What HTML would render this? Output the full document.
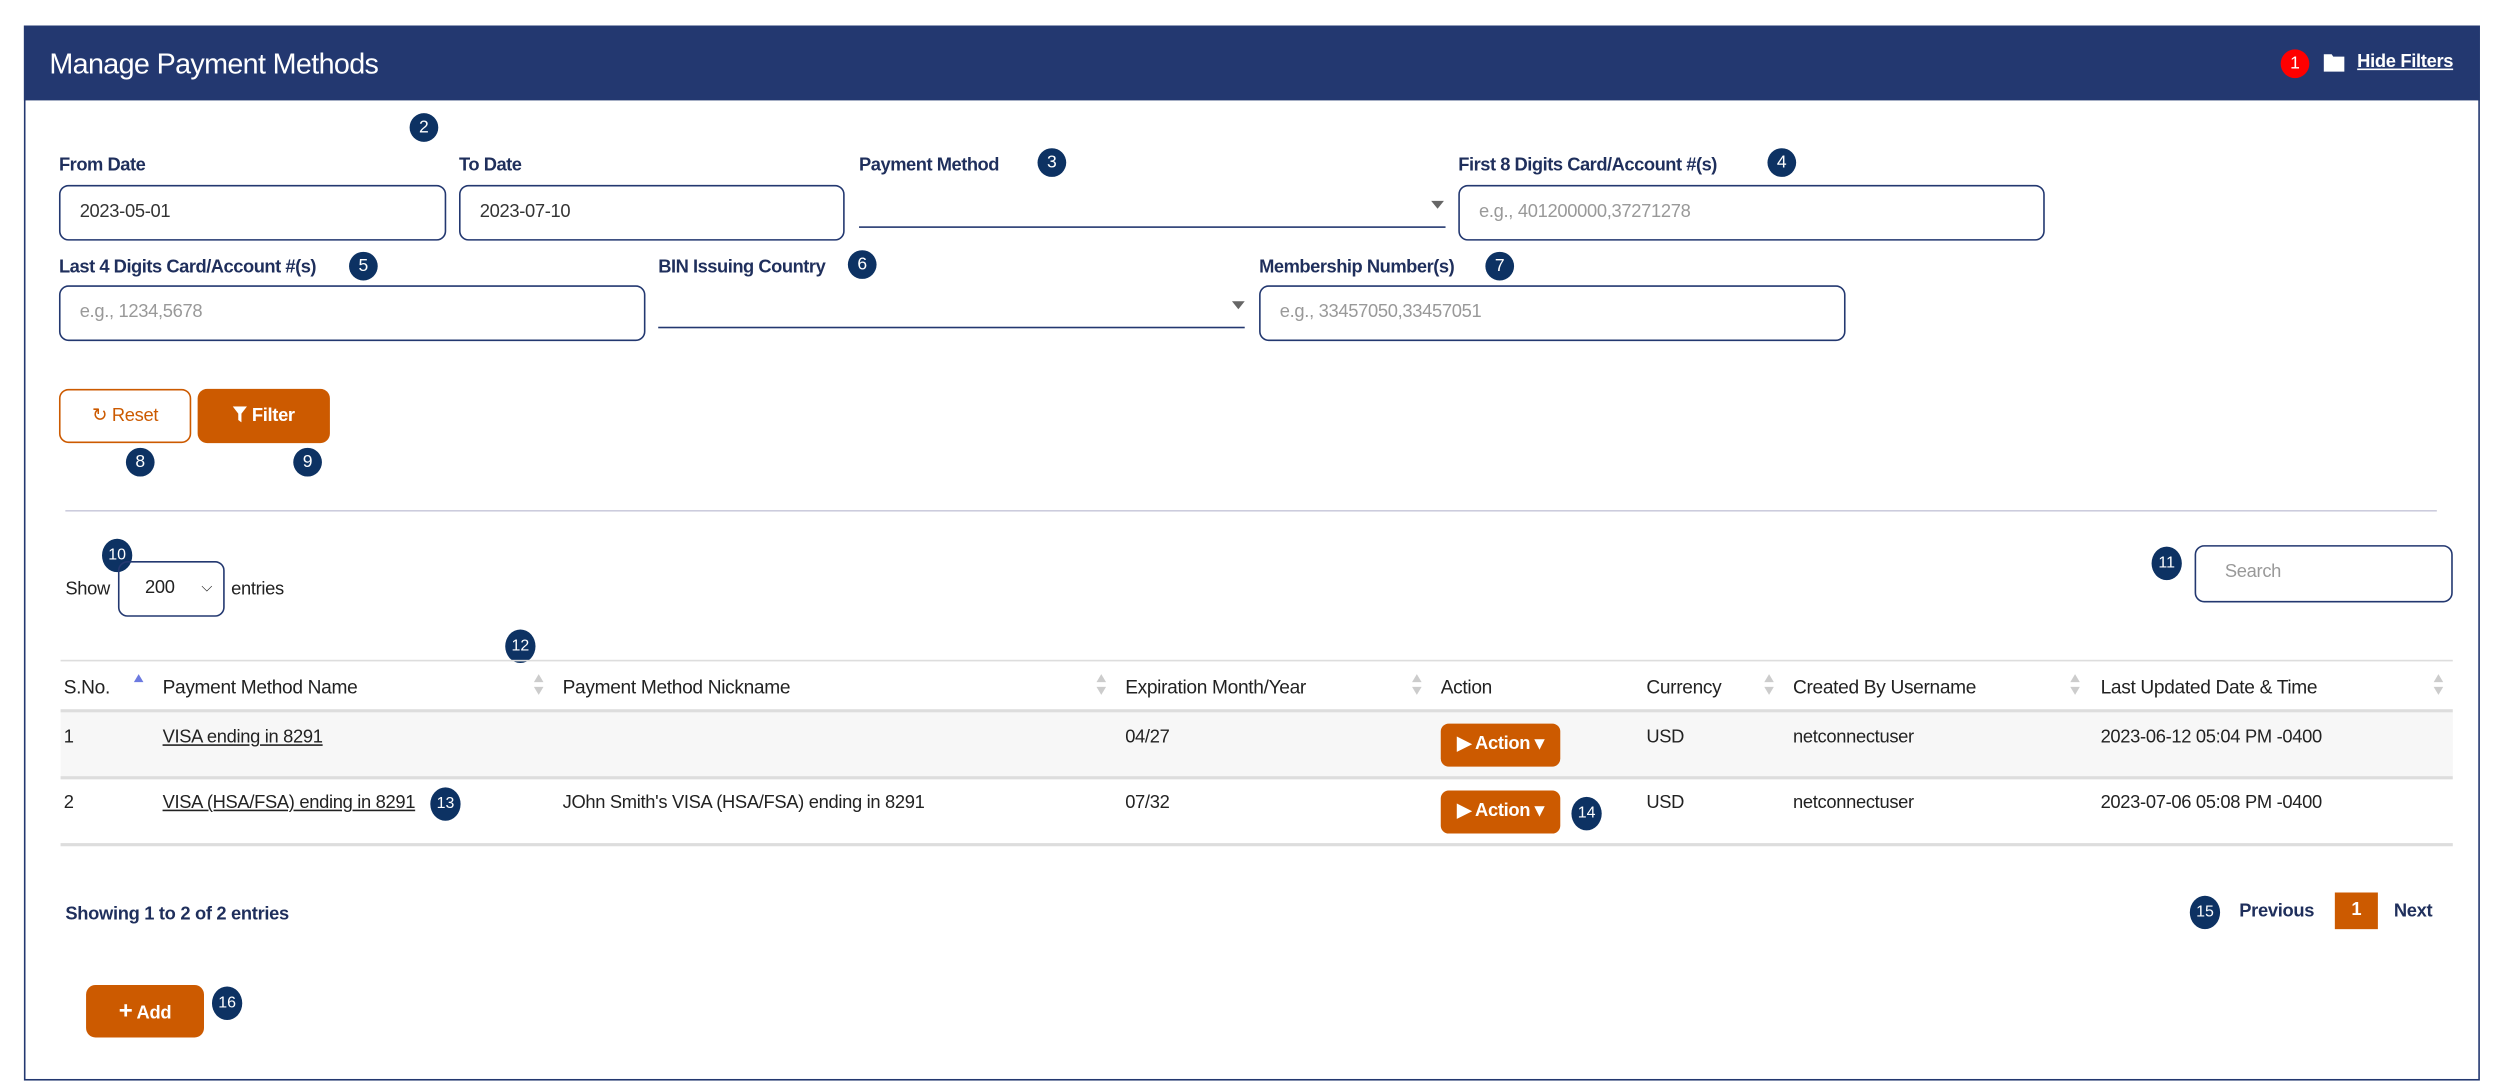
<!DOCTYPE html>
<html><head><meta charset="utf-8"><style>
html,body{margin:0;padding:0;background:#fff;}
body{width:2499px;height:1090px;overflow:hidden;}
#w{position:absolute;left:0;top:0;width:1568px;height:684px;transform:scale(1.59375);transform-origin:0 0;font-family:"Liberation Sans",sans-serif;color:#222;font-size:11.5px;letter-spacing:-0.2px;}
.a{position:absolute;white-space:nowrap;}
.b{position:absolute;width:18px;height:18px;border-radius:50%;background:#0d3263;color:#fff;font-size:11px;line-height:18px;text-align:center;letter-spacing:0;}
.lbl{position:absolute;font-size:11.5px;font-weight:bold;color:#1f2f5c;white-space:nowrap;letter-spacing:-0.3px;}
.in{position:absolute;border:1px solid #233870;border-radius:6px;box-sizing:border-box;height:35px;font-size:11.5px;line-height:33px;padding-left:12px;color:#333;}
.ph{color:#999;}
.sel{position:absolute;border-bottom:1px solid #233870;height:1px;}
.arr{position:absolute;width:0;height:0;border-left:4px solid transparent;border-right:4px solid transparent;border-top:5px solid #666;}
.th{position:absolute;top:424px;font-size:12px;color:#222;white-space:nowrap;}
.srt{position:absolute;top:423px;width:6px;height:14px;}
.srt:before{content:"";position:absolute;left:0;top:0;border-left:3px solid transparent;border-right:3px solid transparent;border-bottom:5px solid #ccc;}
.srt:after{content:"";position:absolute;left:0;top:8px;border-left:3px solid transparent;border-right:3px solid transparent;border-top:5px solid #ccc;}
.td{position:absolute;font-size:11.5px;color:#222;white-space:nowrap;}
.btn{position:absolute;background:#cc5a00;color:#fff;border-radius:5px;font-weight:bold;font-size:11.5px;text-align:center;}
</style></head><body><div id="w">
<div class="a" style="left:15px;top:16px;width:1539px;height:660px;border:1px solid #233870;"></div>
<div class="a" style="left:15px;top:16px;width:1541px;height:47px;background:#233870;"></div>
<div class="a" style="left:31px;top:30px;color:#fff;font-size:18px;letter-spacing:-0.4px;">Manage Payment Methods</div>
<div class="b" style="left:1431px;top:31px;background:#f00;">1</div>
<svg class="a" style="left:1458px;top:33px" width="13" height="12" viewBox="0 0 13 12"><path d="M0 1h5l1 1.5h7V12H0z" fill="#fff"/></svg>
<div class="a" style="left:1479px;top:33px;color:#fff;font-weight:bold;font-size:11.5px;text-decoration:underline;">Hide Filters</div>

<div class="b" style="left:257px;top:71px;">2</div>
<div class="lbl" style="left:37px;top:98px;">From Date</div>
<div class="lbl" style="left:288px;top:98px;">To Date</div>
<div class="lbl" style="left:539px;top:98px;">Payment Method</div>
<div class="b" style="left:651px;top:93px;">3</div>
<div class="lbl" style="left:915px;top:98px;">First 8 Digits Card/Account #(s)</div>
<div class="b" style="left:1109px;top:93px;">4</div>
<div class="in" style="left:37px;top:116px;width:243px;">2023-05-01</div>
<div class="in" style="left:288px;top:116px;width:242px;">2023-07-10</div>
<div class="sel" style="left:539px;top:141px;width:368px;"></div>
<div class="arr" style="left:898px;top:126px;"></div>
<div class="in ph" style="left:915px;top:116px;width:368px;">e.g., 401200000,37271278</div>

<div class="lbl" style="left:37px;top:162px;">Last 4 Digits Card/Account #(s)</div>
<div class="b" style="left:219px;top:158px;">5</div>
<div class="lbl" style="left:413px;top:162px;">BIN Issuing Country</div>
<div class="b" style="left:532px;top:157px;">6</div>
<div class="lbl" style="left:790px;top:162px;">Membership Number(s)</div>
<div class="b" style="left:932px;top:158px;">7</div>
<div class="in ph" style="left:37px;top:179px;width:368px;">e.g., 1234,5678</div>
<div class="sel" style="left:413px;top:204px;width:368px;"></div>
<div class="arr" style="left:773px;top:189px;"></div>
<div class="in ph" style="left:790px;top:179px;width:368px;">e.g., 33457050,33457051</div>

<div class="a" style="left:37px;top:244px;width:83px;height:34px;box-sizing:border-box;border:1px solid #cc5a00;border-radius:6px;color:#cc5a00;font-size:11.5px;line-height:32px;text-align:center;">&#x21bb; Reset</div>
<div class="btn" style="left:124px;top:244px;width:83px;height:34px;line-height:34px;border-radius:6px;"><svg width="9" height="10" viewBox="0 0 9 10" style="vertical-align:-1px"><path d="M0 0h9L5.5 4.5V10L3.5 8.5V4.5z" fill="#fff"/></svg> Filter</div>
<div class="b" style="left:79px;top:281px;">8</div>
<div class="b" style="left:184px;top:281px;">9</div>

<div class="a" style="left:41px;top:320px;width:1488px;height:1px;background:#ccd;"></div>
<div class="b" style="left:64px;top:338px;width:19px;height:21px;line-height:21px;font-size:10px;">10</div>
<div class="td" style="left:41px;top:364px;">Show</div>
<div class="a" style="left:74px;top:352px;width:67px;height:35px;box-sizing:border-box;border:1px solid #233870;border-radius:6px;font-size:11.5px;line-height:33px;padding-left:16px;">200<span style="position:absolute;right:7px;top:-1px;font-size:9px;">&#x2335;</span></div>
<div class="td" style="left:145px;top:364px;">entries</div>
<div class="b" style="left:1350px;top:343px;width:19px;height:21px;line-height:21px;font-size:10px;">11</div>
<div class="in ph" style="left:1377px;top:342px;width:162px;height:36px;padding-left:18px;">Search</div>
<div class="b" style="left:317px;top:395px;width:19px;height:21px;line-height:21px;font-size:10px;">12</div>

<div class="a" style="left:38px;top:414px;width:1501px;height:1px;background:#ddd;"></div>
<div class="th" style="left:40px;">S.No.</div>
<div class="a" style="left:84px;top:423px;border-left:3px solid transparent;border-right:3px solid transparent;border-bottom:5px solid #6c7ae0;"></div>
<div class="th" style="left:102px;">Payment Method Name</div><div class="srt" style="left:335px;"></div>
<div class="th" style="left:353px;">Payment Method Nickname</div><div class="srt" style="left:688px;"></div>
<div class="th" style="left:706px;">Expiration Month/Year</div><div class="srt" style="left:886px;"></div>
<div class="th" style="left:904px;">Action</div>
<div class="th" style="left:1033px;">Currency</div><div class="srt" style="left:1107px;"></div>
<div class="th" style="left:1125px;">Created By Username</div><div class="srt" style="left:1299px;"></div>
<div class="th" style="left:1318px;">Last Updated Date &amp; Time</div><div class="srt" style="left:1527px;"></div>
<div class="a" style="left:38px;top:445px;width:1501px;height:2px;background:#ddd;"></div>
<div class="a" style="left:38px;top:447px;width:1501px;height:40px;background:#f7f7f7;"></div>
<div class="a" style="left:38px;top:487px;width:1501px;height:2px;background:#ddd;"></div>
<div class="a" style="left:38px;top:529px;width:1501px;height:2px;background:#ddd;"></div>

<div class="td" style="left:40px;top:457px;">1</div>
<div class="td" style="left:102px;top:457px;text-decoration:underline;">VISA ending in 8291</div>
<div class="td" style="left:706px;top:457px;">04/27</div>
<div class="btn" style="left:904px;top:454px;width:75px;height:27px;line-height:27px;">&#x25B6; Action &#x25BE;</div>
<div class="td" style="left:1033px;top:457px;">USD</div>
<div class="td" style="left:1125px;top:457px;">netconnectuser</div>
<div class="td" style="left:1318px;top:457px;">2023-06-12 05:04 PM -0400</div>

<div class="td" style="left:40px;top:498px;">2</div>
<div class="td" style="left:102px;top:498px;text-decoration:underline;">VISA (HSA/FSA) ending in 8291</div>
<div class="b" style="left:270px;top:494px;width:19px;height:21px;line-height:21px;font-size:10px;">13</div>
<div class="td" style="left:353px;top:498px;">JOhn Smith's VISA (HSA/FSA) ending in 8291</div>
<div class="td" style="left:706px;top:498px;">07/32</div>
<div class="btn" style="left:904px;top:496px;width:75px;height:27px;line-height:27px;">&#x25B6; Action &#x25BE;</div>
<div class="b" style="left:986px;top:500px;width:19px;height:21px;line-height:21px;font-size:10px;">14</div>
<div class="td" style="left:1033px;top:498px;">USD</div>
<div class="td" style="left:1125px;top:498px;">netconnectuser</div>
<div class="td" style="left:1318px;top:498px;">2023-07-06 05:08 PM -0400</div>

<div class="td" style="left:41px;top:568px;color:#1f2f5c;font-weight:bold;">Showing 1 to 2 of 2 entries</div>
<div class="b" style="left:1374px;top:562px;width:19px;height:21px;line-height:21px;font-size:10px;">15</div>
<div class="td" style="left:1405px;top:566px;color:#1f2f5c;font-weight:bold;">Previous</div>
<div class="a" style="left:1465px;top:560px;width:27px;height:23px;background:#cc5a00;color:#fff;text-align:center;line-height:23px;font-weight:bold;">1</div>
<div class="td" style="left:1502px;top:566px;color:#1f2f5c;font-weight:bold;">Next</div>

<div class="btn" style="left:54px;top:618px;width:74px;height:33px;line-height:33px;border-radius:6px;"><span style="font-size:15px;">+</span> Add</div>
<div class="b" style="left:133px;top:619px;width:19px;height:21px;line-height:21px;font-size:10px;">16</div>
</div></body></html>
